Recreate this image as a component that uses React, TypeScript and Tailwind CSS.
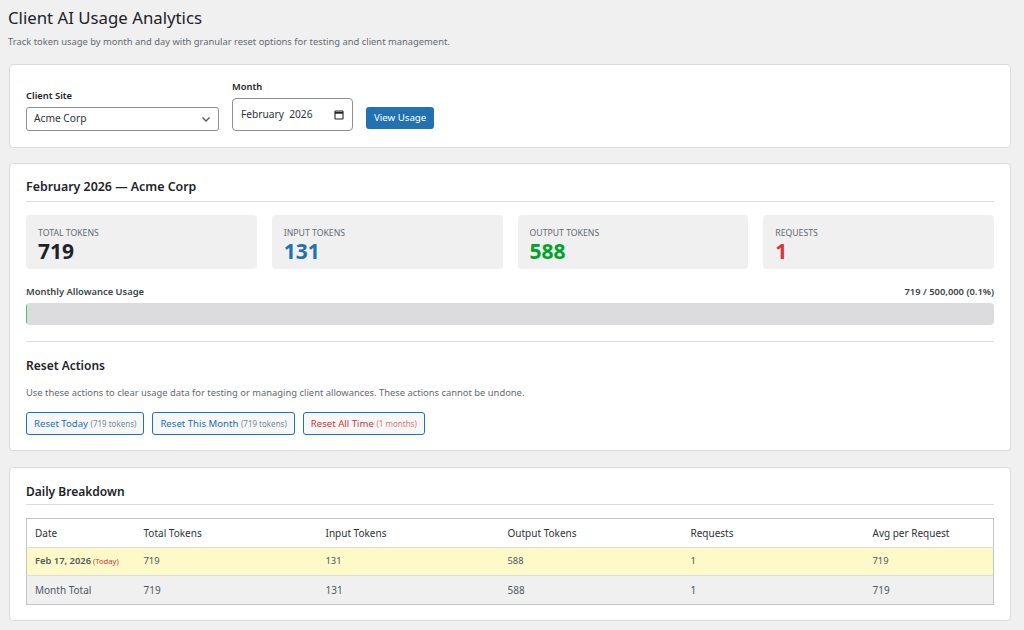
import React from 'react';

const font = { fontFamily: '"Noto Sans", "Open Sans", sans-serif' };

const StatBox = ({ label, value, color }: { label: string; value: string; color: string }) => (
  <div className="bg-[#f0f0f1] rounded-[4px] h-[54px] px-3 pt-[12px]">
    <div className="text-[8.7px] leading-[12px] uppercase text-[#646970]">{label}</div>
    <div className={`text-[21px] leading-[24px] font-bold ${color}`}>{value}</div>
  </div>
);

const ResetButton = ({ label, note, danger }: { label: string; note: string; danger?: boolean }) => (
  <button
    className={`h-[23px] px-[7px] rounded-[3px] border border-[#2271b1] bg-[#f6f7f7] text-[9.6px] leading-[20px] ${
      danger ? 'text-[#d63638]' : 'text-[#2271b1]'
    }`}
  >
    {label}{' '}
    <span className={`text-[8px] ${danger ? 'text-[#e0787a]' : 'text-[#7a8a99]'}`}>({note})</span>
  </button>
);

const Card = ({ children, className = '' }: { children: React.ReactNode; className?: string }) => (
  <div className={`bg-white border border-[#dcdcde] rounded-[4px] px-4 ${className}`}>{children}</div>
);

const rows = [
  { date: 'Feb 17, 2026', today: true, total: '719', input: '131', output: '588', req: '1', avg: '719' },
];

export default function App() {
  return (
    <div className="min-h-[630px] bg-[#f0f0f1] pl-2 pr-[13px] pt-[6px] pb-4 text-[#3c434a]" style={font}>
      {/* Header */}
      <h1 className="text-[16.8px] leading-[24px] text-[#1d2327]">Client AI Usage Analytics</h1>
      <p className="text-[9.4px] leading-[14px] text-[#646970] mt-[5px]">
        Track token usage by month and day with granular reset options for testing and client management.
      </p>

      {/* Filters */}
      <Card className="mt-[15px] ml-px h-[84px] flex items-end gap-[13px] pb-4">
        <div>
          <div className="text-[9.4px] leading-[14px] font-semibold text-[#1d2327] mb-[4px]">Client Site</div>
          <div className="w-[193px] h-[24px] border border-[#8c8f94] rounded-[3px] flex items-center justify-between pl-[7px] pr-[6px] text-[10.2px] text-[#2c3338]">
            <span>Acme Corp</span>
            <svg width="12" height="12" viewBox="0 0 12 12" fill="none" stroke="#50575e" strokeWidth="1.3">
              <path d="M2.5 4.5 6 8l3.5-3.5" />
            </svg>
          </div>
        </div>
        <div>
          <div className="text-[9.4px] leading-[14px] font-semibold text-[#1d2327] mb-[4px]">Month</div>
          <div className="w-[121px] h-[33px] border border-[#8c8f94] rounded-[4px] flex items-center justify-between pl-[8px] pr-[8px] text-[10.2px] text-[#2c3338]">
            <span>February&nbsp; 2026</span>
            <svg width="10" height="10" viewBox="0 0 10 10" fill="none" stroke="#1d2327">
              <rect x="1" y="1" width="8" height="8" rx="0.5" strokeWidth="1.1" />
              <path d="M1 2.8h8" strokeWidth="1.8" />
            </svg>
          </div>
        </div>
        <button className="mb-[2px] h-[22px] px-[8px] rounded-[3px] bg-[#2271b1] text-white text-[9.7px] leading-[20px]">
          View Usage
        </button>
      </Card>

      {/* Summary */}
      <Card className="mt-[15px] ml-px pt-[14px] pb-[15px]">
        <h2 className="text-[12.4px] leading-[18px] font-semibold text-[#1d2327] pb-[5px] border-b border-[#dcdcde]">
          February 2026 — Acme Corp
        </h2>
        <div className="grid grid-cols-4 gap-[15px] mt-[13px]">
          <StatBox label="Total Tokens" value="719" color="text-[#1d2327]" />
          <StatBox label="Input Tokens" value="131" color="text-[#2271b1]" />
          <StatBox label="Output Tokens" value="588" color="text-[#00a32a]" />
          <StatBox label="Requests" value="1" color="text-[#d63638]" />
        </div>

        <div className="mt-[15px] flex justify-between text-[9.4px] leading-[15px] font-semibold text-[#3c434a]">
          <span>Monthly Allowance Usage</span>
          <span>719 / 500,000 (0.1%)</span>
        </div>
        <div className="mt-[4px] h-[22px] bg-[#dcdcde] rounded-[4px] overflow-hidden">
          <div className="h-full bg-[#00a32a] opacity-60" style={{ width: `${Math.max(0.1, 0.15)}%` }} />
        </div>

        <div className="mt-[16px] border-t border-[#dcdcde] pt-[15px]">
          <h3 className="text-[12px] leading-[18px] font-semibold text-[#1d2327]">Reset Actions</h3>
          <p className="mt-[10px] text-[9.4px] leading-[15px] text-[#646970]">
            Use these actions to clear usage data for testing or managing client allowances. These actions cannot be undone.
          </p>
          <div className="mt-[12px] flex gap-[8px]">
            <ResetButton label="Reset Today" note="719 tokens" />
            <ResetButton label="Reset This Month" note="719 tokens" />
            <ResetButton label="Reset All Time" note="1 months" danger />
          </div>
        </div>
      </Card>

      {/* Daily breakdown */}
      <Card className="mt-[16px] ml-px pt-[15px] pb-[15px]">
        <h2 className="text-[12px] leading-[18px] font-semibold text-[#1d2327] pb-[3px] border-b border-[#dcdcde]">
          Daily Breakdown
        </h2>
        <table className="mt-[13px] w-full border border-[#c3c4c7] border-collapse text-[10px] text-[#50575e] table-fixed">
          <colgroup>
            <col className="w-[109px]" />
            <col className="w-[182px]" />
            <col className="w-[182px]" />
            <col className="w-[183px]" />
            <col className="w-[182px]" />
            <col />
          </colgroup>
          <thead>
            <tr className="h-[29px] bg-white text-[10px] text-[#2c3338] text-left">
              <th className="font-normal px-2">Date</th>
              <th className="font-normal px-2">Total Tokens</th>
              <th className="font-normal px-2">Input Tokens</th>
              <th className="font-normal px-2">Output Tokens</th>
              <th className="font-normal px-2">Requests</th>
              <th className="font-normal px-2">Avg per Request</th>
            </tr>
          </thead>
          <tbody>
            {rows.map(r => (
              <tr key={r.date} className="h-[28px] bg-[#fef9c9] border-t border-[#dcdcde] text-[9.4px]">
                <td className="px-2 font-semibold whitespace-nowrap">
                  {r.date}
                  {r.today && <span className="font-normal text-[7.6px] text-[#d63638]"> (Today)</span>}
                </td>
                <td className="px-2">{r.total}</td>
                <td className="px-2">{r.input}</td>
                <td className="px-2">{r.output}</td>
                <td className="px-2">{r.req}</td>
                <td className="px-2">{r.avg}</td>
              </tr>
            ))}
            <tr className="h-[29px] bg-[#f0f0f1] border-t border-[#dcdcde]">
              <td className="px-2">Month Total</td>
              <td className="px-2">719</td>
              <td className="px-2">131</td>
              <td className="px-2">588</td>
              <td className="px-2">1</td>
              <td className="px-2">719</td>
            </tr>
          </tbody>
        </table>
      </Card>
    </div>
  );
}
